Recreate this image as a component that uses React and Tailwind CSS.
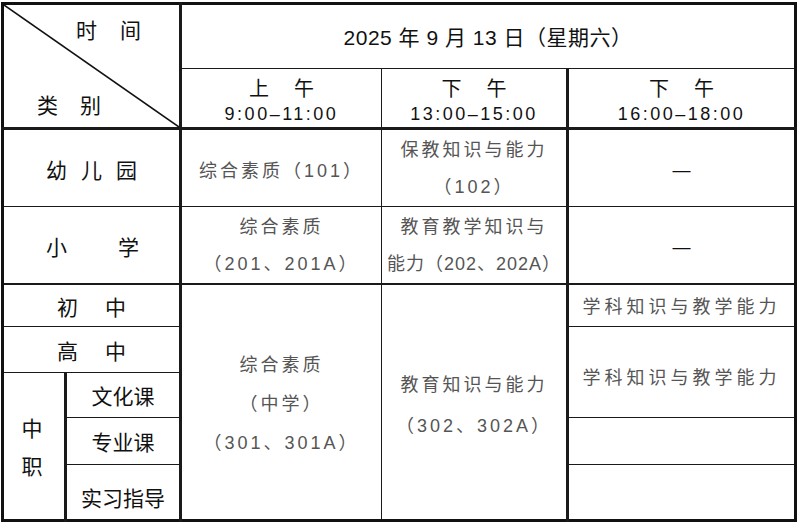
import React from 'react';

const cell = 'border border-[#1a1a1a] p-0 text-center align-middle';
const data = 'text-[18px] tracking-[3px] text-[#555]';
const label = 'text-[21px] text-[#111] pt-[5px]';

const Spaced = ({ chars, gap }) => (
  <div className="flex justify-center" style={{ gap }}>
    {chars.map((c) => (
      <span key={c}>{c}</span>
    ))}
  </div>
);

const App = () => {
  return (
    <div className="w-[800px] h-[522px] bg-white pt-[2px] pl-[1px] font-['Liberation_Sans','Noto_Sans_CJK_SC',sans-serif] text-[#111]">
      <table className="w-[796px] table-fixed border-collapse border-[3px] border-[#111]">
        <colgroup>
          <col className="w-[63px]" />
          <col className="w-[115px]" />
          <col className="w-[201px]" />
          <col className="w-[186px]" />
          <col />
        </colgroup>
        <tbody>
          <tr className="h-[64px]">
            <td rowSpan={2} colSpan={2} className={`${cell} relative border-r-[3px] border-b-[3px]`}>
              <svg className="absolute inset-0 w-full h-full" preserveAspectRatio="none" viewBox="0 0 100 100">
                <line x1="0" y1="0" x2="100" y2="100" stroke="#111" strokeWidth="1.6" vectorEffect="non-scaling-stroke" />
              </svg>
              <div className="relative h-[122px] flex flex-col justify-between text-[21px]">
                <div className="flex justify-end gap-[23px] pr-[38px] pt-[10px]">
                  <span>时</span>
                  <span>间</span>
                </div>
                <div className="flex justify-start gap-[22px] pl-[33px] pb-[6px]">
                  <span>类</span>
                  <span>别</span>
                </div>
              </div>
            </td>
            <td colSpan={3} className={`${cell} pt-[3px] text-[21px] tracking-[0.5px]`}>
              2025 年 9 月 13 日（星期六）
            </td>
          </tr>
          <tr className="h-[59px]">
            <td className={`${cell} pt-[5px] border-b-[3px]`}>
              <div className="text-[20px] leading-[26px]">
                <Spaced chars={['上', '午']} gap="25px" />
              </div>
              <div className="text-[18px] leading-[24px] tracking-[2.5px]">9:00–11:00</div>
            </td>
            <td className={`${cell} pt-[5px] border-b-[3px] border-r-[3px]`}>
              <div className="text-[20px] leading-[26px]">
                <Spaced chars={['下', '午']} gap="25px" />
              </div>
              <div className="text-[18px] leading-[24px] tracking-[2.5px]">13:00–15:00</div>
            </td>
            <td className={`${cell} pt-[5px] border-b-[3px]`}>
              <div className="text-[20px] leading-[26px]">
                <Spaced chars={['下', '午']} gap="25px" />
              </div>
              <div className="text-[18px] leading-[24px] tracking-[2.5px]">16:00–18:00</div>
            </td>
          </tr>
          <tr className="h-[78px]">
            <td colSpan={2} className={`${cell} border-r-[3px] ${label}`}>
              <Spaced chars={['幼', '儿', '园']} gap="14px" />
            </td>
            <td className={`${cell} ${data} pt-[5px] leading-[30px]`}>综合素质（101）</td>
            <td className={`${cell} border-r-[3px] ${data} pt-[2px] leading-[37px]`}>
              <div>保教知识与能力</div>
              <div>（102）</div>
            </td>
            <td className={`${cell} pt-[5px] text-[18px] text-[#111]`}>—</td>
          </tr>
          <tr className="h-[76px]">
            <td colSpan={2} className={`${cell} border-r-[3px] border-b-2 ${label}`}>
              <div className="flex justify-between pl-[42px] pr-[40px]">
                <span>小</span>
                <span>学</span>
              </div>
            </td>
            <td className={`${cell} border-b-2 ${data} pt-[2px] leading-[37px]`}>
              <div>综合素质</div>
              <div>（201、201A）</div>
            </td>
            <td className={`${cell} border-r-[3px] border-b-2 ${data} pt-[2px] leading-[37px]`}>
              <div>教育教学知识与</div>
              <div className="tracking-[1px]">能力（202、202A）</div>
            </td>
            <td className={`${cell} pt-[5px] border-b-2 text-[18px] text-[#111]`}>—</td>
          </tr>
          <tr className="h-[42px]">
            <td colSpan={2} className={`${cell} border-r-[3px] ${label}`}>
              <Spaced chars={['初', '中']} gap="27px" />
            </td>
            <td rowSpan={5} className={`${cell} ${data} pt-[6px] leading-[39px]`}>
              <div>综合素质</div>
              <div>（中学）</div>
              <div>（301、301A）</div>
            </td>
            <td rowSpan={5} className={`${cell} border-r-[3px] ${data} pt-[8px] leading-[41px]`}>
              <div>教育知识与能力</div>
              <div>（302、302A）</div>
            </td>
            <td className={`${cell} ${data} pt-[4px] leading-[30px] tracking-[4px]`}>学科知识与教学能力</td>
          </tr>
          <tr className="h-[46px]">
            <td colSpan={2} className={`${cell} border-r-[3px] ${label}`}>
              <Spaced chars={['高', '中']} gap="27px" />
            </td>
            <td rowSpan={2} className={`${cell} ${data} pt-[12px] leading-[30px] tracking-[4px]`}>
              学科知识与教学能力
            </td>
          </tr>
          <tr className="h-[45px]">
            <td rowSpan={3} className={`${cell} border-r-[3px] ${label}`}>
              <div className="leading-[38px] pr-[4px]">
                <div>中</div>
                <div>职</div>
              </div>
            </td>
            <td className={`${cell} border-r-[3px] ${label}`}>文化课</td>
          </tr>
          <tr className="h-[47px]">
            <td className={`${cell} border-r-[3px] ${label}`}>专业课</td>
            <td className={cell}></td>
          </tr>
          <tr className="h-[56px]">
            <td className={`${cell} border-r-[3px] text-[21px] text-[#111] pt-[14px]`}>实习指导</td>
            <td className={cell}></td>
          </tr>
        </tbody>
      </table>
    </div>
  );
};

export default App;
